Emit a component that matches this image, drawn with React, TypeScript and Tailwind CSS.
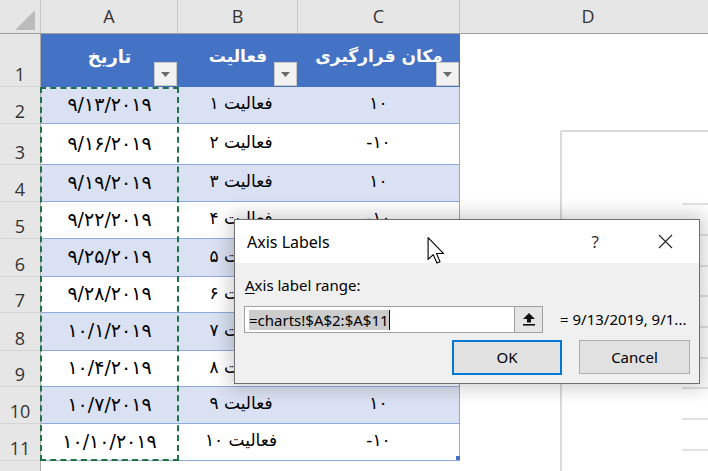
import React from "react";

const rows = [
  { n: 2, h: 37, date: "۹/۱۳/۲۰۱۹", act: "فعالیت ۱", v: "۱۰" },
  { n: 3, h: 41, date: "۹/۱۶/۲۰۱۹", act: "فعالیت ۲", v: "-۱۰" },
  { n: 4, h: 37, date: "۹/۱۹/۲۰۱۹", act: "فعالیت ۳", v: "۱۰" },
  { n: 5, h: 37, date: "۹/۲۲/۲۰۱۹", act: "فعالیت ۴", v: "-۱۰" },
  { n: 6, h: 38, date: "۹/۲۵/۲۰۱۹", act: "فعالیت ۵", v: "۱۰" },
  { n: 7, h: 36, date: "۹/۲۸/۲۰۱۹", act: "فعالیت ۶", v: "-۱۰" },
  { n: 8, h: 38, date: "۱۰/۱/۲۰۱۹", act: "فعالیت ۷", v: "۱۰" },
  { n: 9, h: 36, date: "۱۰/۴/۲۰۱۹", act: "فعالیت ۸", v: "-۱۰" },
  { n: 10, h: 37, date: "۱۰/۷/۲۰۱۹", act: "فعالیت ۹", v: "۱۰" },
  { n: 11, h: 37, date: "۱۰/۱۰/۲۰۱۹", act: "فعالیت ۱۰", v: "-۱۰" },
];

function FilterButton() {
  return (
    <div className="absolute bottom-[1px] right-[1px] flex h-[24px] w-[23px] items-center justify-center border border-[#c8c8c8] bg-[#f2f2f2]">
      <svg width="9" height="5" viewBox="0 0 9 5">
        <polygon points="0,0 9,0 4.5,5" fill="#6b6b6b" />
      </svg>
    </div>
  );
}

function RowHead({ n, h }: { n: number; h: number }) {
  return (
    <div
      className="flex w-[41px] shrink-0 items-end justify-center border-r border-b border-r-[#ababab] border-b-[#d4d4d4] bg-[#e6e6e6] pb-[3px] text-[18px] leading-none text-[#333]"
      style={{ height: h }}
    >
      {n}
    </div>
  );
}

export default function App() {
  return (
    <div className="relative h-[471px] w-[708px] overflow-hidden bg-white font-['Open_Sans',sans-serif]">
      {/* column headers */}
      <div className="flex h-[34px] border-b border-[#9f9f9f] bg-[#e6e6e6] text-[18px] text-[#333]">
        <div className="relative w-[41px] shrink-0 border-r border-[#c6c6c6]">
          <svg className="absolute left-[15px] top-[10px]" width="20" height="20" viewBox="0 0 20 20">
            <polygon points="20,0 20,20 0,20" fill="#bcbcbc" />
          </svg>
        </div>
        <div className="flex w-[137px] shrink-0 items-center justify-center border-r border-[#c6c6c6]">A</div>
        <div className="flex w-[120px] shrink-0 items-center justify-center border-r border-[#c6c6c6]">B</div>
        <div className="flex w-[162px] shrink-0 items-center justify-center border-r border-[#c6c6c6]">C</div>
        <div className="flex flex-1 items-center justify-center pl-[8px]">D</div>
      </div>

      {/* table header row */}
      <div className="flex h-[53px]">
        <RowHead n={1} h={53} />
        <div className="flex w-[419px] shrink-0 bg-[#4472c4] font-['DejaVu_Sans',sans-serif] text-[17px] font-bold text-white">
          <div className="relative flex w-[137px] items-center justify-center pb-[8px] text-[18px]" dir="rtl">
            تاریخ
            <FilterButton />
          </div>
          <div className="relative flex w-[120px] items-center justify-center pb-[8px]" dir="rtl">
            فعالیت
            <FilterButton />
          </div>
          <div className="relative flex w-[162px] items-center justify-center pb-[8px]" dir="rtl">
            مکان قرارگیری
            <FilterButton />
          </div>
        </div>
      </div>

      {rows.map((r, i) => (
        <div key={r.n} className="flex" style={{ height: r.h }}>
          <RowHead n={r.n} h={r.h} />
          <div
            className={
              "flex w-[419px] shrink-0 border-r border-b border-[#8ea9db] font-['DejaVu_Sans',sans-serif] text-[17px] text-black " +
              (i % 2 === 0 ? "bg-[#d9e1f2]" : "bg-white")
            }
          >
            <div className="flex w-[137px] items-center justify-center pb-[2px] text-[19px]" dir="ltr">
              {r.date}
            </div>
            <div className="flex w-[120px] items-center justify-center pb-[2px] pl-[6px]" dir="rtl">
              {r.act}
            </div>
            <div className="flex w-[161px] items-center justify-center pb-[2px]" dir="ltr">
              {r.v}
            </div>
          </div>
        </div>
      ))}

      <div className="flex h-[37px]">
        <RowHead n={12} h={37} />
      </div>

      {/* selection marching ants */}
      <div className="absolute left-[40px] top-[87px] h-[374px] w-[139px] border-2 border-dashed border-[#217346]" />
      {/* table resize handle */}
      <div className="absolute left-[456px] top-[456px] h-[4px] w-[4px] bg-[#4472c4]" />

      {/* chart, partly visible */}
      <svg className="absolute left-[461px] top-[34px]" width="247" height="437" viewBox="0 0 247 437">
        <line x1="100" y1="97" x2="100" y2="437" stroke="#d9d9d9" strokeWidth="2" />
        <line x1="100" y1="97" x2="247" y2="97" stroke="#d9d9d9" strokeWidth="2" />
        {[170, 201, 232, 262, 293, 324, 354, 385, 416].map((y) => (
          <line key={y} x1="221" y1={y} x2="247" y2={y} stroke="#d9d9d9" strokeWidth="1.5" />
        ))}
      </svg>

      {/* dialog */}
      <div className="absolute left-[234px] top-[219px] flex h-[165px] w-[466px] flex-col border border-[#6f6f6f] bg-[#f0f0f0] font-['Noto_Sans',sans-serif] text-black shadow-[0_0_18px_4px_rgba(0,0,0,0.2)]">
        <div className="flex h-[43px] items-center bg-white pl-[12px] pr-[26px]">
          <span className="flex-1 text-[16px]">Axis Labels</span>
          <span className="mr-[59px] text-[17px] text-[#333]">?</span>
          <svg width="15" height="15" viewBox="0 0 15 15">
            <path d="M1 1 L14 14 M14 1 L1 14" stroke="#222" strokeWidth="1.1" />
          </svg>
        </div>
        <div className="flex flex-1 flex-col px-[9px] pt-[12px]">
          <div className="pl-[1px] text-[15px] leading-[20px]">
            <span className="underline decoration-1 underline-offset-2">A</span>xis label range:
          </div>
          <div className="mt-[11px] flex h-[27px] items-center">
            <div className="flex h-full w-[271px] items-center border border-[#a0a0a0] bg-white pl-[4px]">
              <span className="bg-[#cccccc] text-[15px] leading-[20px]">=charts!$A$2:$A$11</span>
              <span className="h-[20px] w-[1px] bg-black" />
            </div>
            <div className="flex h-full w-[28px] items-center justify-center border border-l-0 border-[#a0a0a0] bg-[#e5e5e5]">
              <svg width="12" height="13" viewBox="0 0 12 13">
                <polygon points="6,0 12,6 8,6 8,9.5 4,9.5 4,6 0,6" fill="#111" />
                <rect x="0" y="11" width="12" height="1.6" fill="#111" />
              </svg>
            </div>
            <span className="ml-[17px] text-[15px]">= 9/13/2019, 9/1...</span>
          </div>
          <div className="mt-[7px] flex pl-[208px]">
            <div className="flex h-[35px] w-[110px] items-center justify-center border-2 border-[#0078d7] bg-[#e1e1e1] text-[15px]">
              OK
            </div>
            <div className="ml-[17px] flex h-[34px] w-[111px] items-center justify-center border border-[#adadad] bg-[#e1e1e1] text-[15px]">
              Cancel
            </div>
          </div>
        </div>
      </div>

      {/* mouse cursor */}
      <svg className="absolute left-[427px] top-[237px]" width="19" height="28" viewBox="0 0 13 20">
        <path d="M0.5 0.5 L0.5 16 L4.2 12.6 L6.8 18.6 L9 17.6 L6.5 11.8 L11.6 11.8 Z" fill="white" stroke="black" strokeWidth="0.8" strokeLinejoin="round" />
      </svg>
    </div>
  );
}
